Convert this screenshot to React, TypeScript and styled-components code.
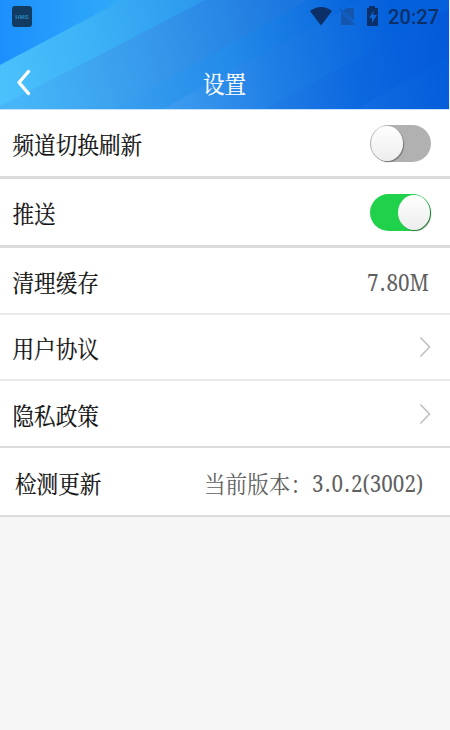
import React from 'react';
import styled, { createGlobalStyle } from 'styled-components';

const GlobalStyle = createGlobalStyle`
  * { box-sizing: border-box; }
  html, body { margin: 0; padding: 0; background: #f6f6f6; }
  body { overflow: hidden; }
`;

const Screen = styled.main`
  width: 450px;
  height: 730px;
  display: flex;
  flex-direction: column;
  background: #f6f6f6;
  color: #111;
  font-family: 'Noto Serif CJK SC', 'Noto Serif SC', 'Noto Sans CJK SC', serif;
`;

const Header = styled.header`
  position: relative;
  height: 110px;
  flex: none;
  display: flex;
  flex-direction: column;
  overflow: hidden;
  background: #fff;
  border-right: 1px solid #e4eefa;
  border-bottom: 1px solid #c4e2fa;
`;

const Backdrop = styled.svg`
  position: absolute;
  inset: 0;
  z-index: 0;
`;

const StatusBar = styled.div`
  position: relative;
  height: 34px;
  display: flex;
  align-items: center;
  padding: 0 10px 0 12px;
  color: #0b2f66;
`;

const AppBadge = styled.div`
  width: 20px;
  height: 21px;
  margin-right: auto;
  margin-bottom: 1px;
  border-radius: 3px;
  background: #123b61;
  color: #2b85bd;
  display: flex;
  align-items: center;
  justify-content: center;
  font: bold 6px/1 'Liberation Sans', sans-serif;
`;

const StatusIcons = styled.svg`
  flex: none;
`;

const Clock = styled.time`
  width: 51px;
  margin-left: 8px;
  font: 500 20px/34px Roboto, sans-serif;
  letter-spacing: 0.1px;
  white-space: nowrap;
`;

const TitleBar = styled.div`
  position: relative;
  height: 75px;
  display: grid;
  grid-template-columns: 60px 1fr 60px;
  align-items: center;
  padding-top: 22px;
`;

const BackButton = styled.button`
  border: 0;
  padding: 0 0 0 15px;
  background: none;
  display: flex;
`;

const Title = styled.h1`
  margin: 0;
  color: #fff;
  text-align: center;
  font-size: 21.6px;
  line-height: 30px;
  font-weight: 400;
  -webkit-text-stroke: 0.2px currentColor;
  transform: translateY(-0.5px) scaleY(1.12);
`;

const List = styled.section`
  display: flex;
  flex-direction: column;
`;

const Row = styled.div<{ $height: number; $line: number; $tone: string; $left?: number; $right?: number }>`
  height: ${p => p.$height}px;
  flex: none;
  display: flex;
  align-items: center;
  justify-content: space-between;
  padding: 0 ${p => p.$right ?? 19}px 0 ${p => p.$left ?? 12.5}px;
  background: #fff;
  border-bottom: ${p => p.$line}px solid ${p => p.$tone};
`;

const Label = styled.span`
  font-size: 21.6px;
  line-height: 30px;
  white-space: nowrap;
  -webkit-text-stroke: 0.2px currentColor;
  transform: translateY(0.5px) scaleY(1.13);
`;

const Value = styled.span`
  display: flex;
  align-items: center;
  color: #606060;
  font-size: 21.6px;
  line-height: 30px;
  white-space: nowrap;
  transform: translateY(0.5px) scaleY(1.13);
`;

const Latin = styled.span<{ $width: number }>`
  width: ${p => p.$width}px;
  font: 21px/30px 'Noto Serif', 'DejaVu Serif Condensed', 'DejaVu Serif', serif;
  transform: translateY(0.5px) scaleX(0.985);
  transform-origin: left center;
`;

const Point = styled.span`
  margin: 0 1.4px;
`;

const Track = styled.button<{ $on: boolean }>`
  width: 61px;
  height: 37px;
  border: 0;
  border-radius: 19px;
  padding: 1px;
  display: flex;
  justify-content: ${p => (p.$on ? 'flex-end' : 'flex-start')};
  background: ${p => (p.$on ? '#20d14b' : '#b1b1b1')};
`;

const Knob = styled.span<{ $on: boolean }>`
  width: 32px;
  height: 35px;
  border-radius: 50%;
  background: linear-gradient(#fff, #ededed);
  box-shadow: 1px 1px 1px ${p => (p.$on ? '#34733f' : '#727272')};
`;

function Switch({ on, label }: { on: boolean; label: string }) {
  return (
    <Track $on={on} role="switch" aria-checked={on} aria-label={label}>
      <Knob $on={on} />
    </Track>
  );
}

function Figures({ text, width }: { text: string; width: number }) {
  return (
    <Latin $width={width}>
      {text.split('.').map((part, i) => (
        <React.Fragment key={i}>
          {i > 0 && <Point>.</Point>}
          {part}
        </React.Fragment>
      ))}
    </Latin>
  );
}

function Chevron() {
  return (
    <svg width="12" height="22" viewBox="0 0 12 22" fill="none" stroke="#bebebe" strokeWidth="1.5">
      <path d="M1.4 1.4 10.6 11 1.4 20.6" />
    </svg>
  );
}

const bands = [
  { d: 'M0 0H449V109H0Z', from: [0, 20], to: [120, 20], stops: ['#1c8ffd', '#269efc', '#2fabf8'] },
  { d: 'M0 65 123 0H449V109H0Z', from: [0, 80], to: [210, 30], stops: ['#4bc1fc', '#3bb0f6', '#2c98ec'] },
  { d: 'M0 106 90 60 205 0H449V109H0Z', from: [20, 100], to: [300, 40], stops: ['#46b6f8', '#3697ea', '#1b76df'] },
  { d: 'M113 109 225 47 308 0H449V109Z', from: [115, 100], to: [360, 50], stops: ['#39a0f0', '#228ae9', '#0866dd'] },
  { d: 'M163 109 245 63 362 0H449V109Z', from: [170, 100], to: [400, 50], stops: ['#3c9bef', '#1d7ce4', '#0560dc'] },
  { d: 'M265 109 449 8V109Z', from: [265, 100], to: [449, 70], stops: ['#217ee5', '#0c68df', '#045ad9'] },
  { d: 'M357 109 449 57V109Z', from: [357, 105], to: [449, 90], stops: ['#116de0', '#0a65de', '#045dda'] },
];

function HeaderBackdrop() {
  return (
    <Backdrop width="449" height="109" viewBox="0 0 449 109" aria-hidden="true">
      <defs>
        {bands.map((b, i) => (
          <linearGradient key={i} id={`band${i}`} gradientUnits="userSpaceOnUse" x1={b.from[0]} y1={b.from[1]} x2={b.to[0]} y2={b.to[1]}>
            {b.stops.map((color, n) => (
              <stop key={n} offset={n / 2} stopColor={color} />
            ))}
          </linearGradient>
        ))}
      </defs>
      {bands.map((b, i) => (
        <path key={i} d={b.d} fill={`url(#band${i})`} />
      ))}
    </Backdrop>
  );
}

export default function App() {
  return (
    <Screen>
      <GlobalStyle />
      <Header>
        <HeaderBackdrop />
        <StatusBar>
          <AppBadge>HMS</AppBadge>
          <StatusIcons width="70" height="22" viewBox="0 0 70 22">
            <path d="M0 5Q11-3 22 5L11 19.5Z" fill="#0b2f66" />
            <path d="M37 2H44V15L33 4.5Z M31 6.5 43 19H31Z" fill="#1456ad" />
            <path d="M30 3 44.5 19" stroke="#1456ad" strokeWidth="1.5" />
            <path d="M59 2V0H65V2H68V20H57V2Z" fill="#0b2f66" />
            <path d="M64 4 59 12H62V17L67 9H63Z" fill="#0b65d4" />
          </StatusIcons>
          <Clock>20:27</Clock>
        </StatusBar>
        <TitleBar>
          <BackButton aria-label="返回">
            <svg width="17" height="27" viewBox="0 0 17 27" fill="none" stroke="#fff" strokeWidth="3.4" strokeLinecap="round" strokeLinejoin="round">
              <path d="M13.5 2.5 4 13.5 13.5 24.5" />
            </svg>
          </BackButton>
          <Title>设置</Title>
        </TitleBar>
      </Header>
      <List>
        <Row $height={69} $line={3} $tone="#dcdcdc">
          <Label>频道切换刷新</Label>
          <Switch on={false} label="频道切换刷新" />
        </Row>
        <Row $height={69} $line={3} $tone="#dcdcdc">
          <Label>推送</Label>
          <Switch on label="推送" />
        </Row>
        <Row $height={67} $line={2} $tone="#ebebeb">
          <Label>清理缓存</Label>
          <Value><Figures text="7.80M" width={64} /></Value>
        </Row>
        <Row $height={66} $line={2} $tone="#ebebeb">
          <Label>用户协议</Label>
          <Chevron />
        </Row>
        <Row $height={67} $line={2} $tone="#dcdcdc">
          <Label>隐私政策</Label>
          <Chevron />
        </Row>
        <Row $height={69} $line={2} $tone="#dcdcdc" $left={15} $right={25}>
          <Label>检测更新</Label>
          <Value>当前版本：<Figures text="3.0.2(3002)" width={113} /></Value>
        </Row>
      </List>
    </Screen>
  );
}
